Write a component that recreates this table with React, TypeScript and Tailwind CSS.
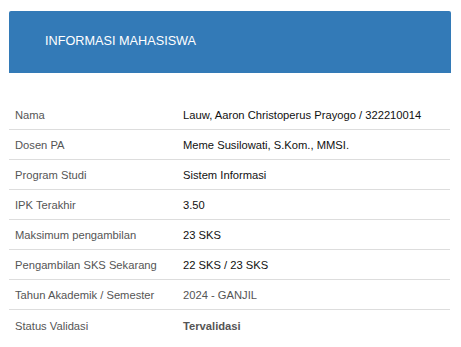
export default function App() {
  const rows: { label: string; value: string; muted?: boolean; bold?: boolean }[] = [
    { label: "Nama", value: "Lauw, Aaron Christoperus Prayogo / 322210014" },
    { label: "Dosen PA", value: "Meme Susilowati, S.Kom., MMSI." },
    { label: "Program Studi", value: "Sistem Informasi" },
    { label: "IPK Terakhir", value: "3.50" },
    { label: "Maksimum pengambilan", value: "23 SKS" },
    { label: "Pengambilan SKS Sekarang", value: "22 SKS / 23 SKS" },
    { label: "Tahun Akademik / Semester", value: "2024 - GANJIL", muted: true },
    { label: "Status Validasi", value: "Tervalidasi", muted: true, bold: true },
  ];
  return (
    <div
      className="w-[461px] h-[347px] bg-white overflow-hidden"
      style={{ fontFamily: '"Liberation Sans", Arial, sans-serif' }}
    >
      <div className="ml-[9px] mt-[11px] mr-[10px]">
        <div className="h-[62px] bg-[#337ab7] rounded-t-[2px] flex items-center pl-[36px]">
          <span className="text-white text-[12.7px] pb-[1px]">INFORMASI MAHASISWA</span>
        </div>
        <div className="mt-[27px] w-[441px]">
          {rows.map((r, i) => (
            <div
              key={r.label}
              className={
                "flex h-[30px] items-center pt-[2px] " +
                (i < rows.length - 1 ? "border-b border-[#dddddd]" : "")
              }
            >
              <div className="w-[168px] pl-[6px] text-[11.2px] text-[#555555]">{r.label}</div>
              <div
                className={
                  "pl-[6px] text-[11.2px] " +
                  (r.muted ? "text-[#555555] " : "text-[#111111] ") +
                  (r.bold ? "font-bold" : "")
                }
              >
                {r.value}
              </div>
            </div>
          ))}
        </div>
      </div>
    </div>
  );
}
